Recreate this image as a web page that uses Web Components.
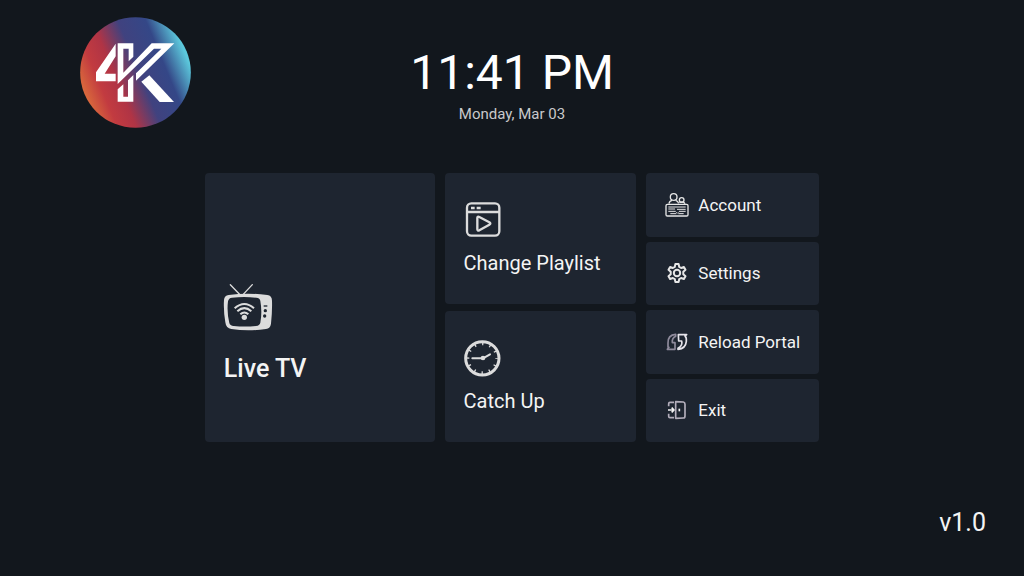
<!DOCTYPE html>
<html lang="en">
<head>
<meta charset="utf-8">
<meta name="viewport" content="width=device-width, initial-scale=1">
<title>4K Player</title>
<style>
  html, body { margin: 0; background: #12171d; }
  body { font-family: Roboto, "Noto Sans", sans-serif; color: #f4f4f4; }
</style>
</head>
<body>
<tv-home></tv-home>

<script>
const define = (name, html) => customElements.define(name, class extends HTMLElement {
  constructor() {
    super();
    this.attachShadow({ mode: 'open' }).innerHTML = html;
  }
});

define('brand-logo', `
  <style>
    :host { display: block; width: 111px; }
    svg { display: block; width: 100%; height: auto; }
  </style>
  <svg viewBox="30 20 333 333" role="img" aria-label="4K">
    <defs>
      <linearGradient id="g" gradientUnits="userSpaceOnUse" x1="46" y1="252" x2="345" y2="128">
        <stop offset="0" stop-color="#d9683c"/>
        <stop offset=".16" stop-color="#c23b40"/>
        <stop offset=".32" stop-color="#b03445"/>
        <stop offset=".54" stop-color="#40427f"/>
        <stop offset=".78" stop-color="#344787"/>
        <stop offset="1" stop-color="#5cc8dc"/>
      </linearGradient>
    </defs>
    <circle cx="196.500" cy="186.500" r="166" fill="url(#g)"/>
    <g fill="#fff" fill-rule="evenodd">
      <path d="M137 100 78 186V213H137V190H104L137 138Z"/>
      <path d="M143 99H190V139L176 153V115H160V187L245 99H313L198 211V189L274 115H252L143 221Z"/>
      <path d="M143 237 160 222V259H174V210L190 194V274H143Z"/>
      <path d="M214 214 238 195 312 275H269Z"/>
    </g>
  </svg>`);

define('home-clock', `
  <style>
    :host { display: block; text-align: center; }
    .time { display: block; font-size: 48px; line-height: 58px; color: #fff; }
    .date { display: block; margin-top: 2px; font-size: 15px; line-height: 20px; color: #c8c9cb; }
  </style>
  <slot name="time" class="time"></slot>
  <slot name="date" class="date"></slot>`);

const tile = `
    :host { display: grid; }
    button { display: flex; margin: 0; border: 0; border-radius: 4px; background: #1e2530;
      color: inherit; font: inherit; text-align: left; cursor: pointer; }
    button:focus-visible { outline: 2px solid #5ecbe0; }
    ::slotted(svg) { display: block; flex: none; overflow: visible; }`;

define('menu-tile', `
  <style>${tile}
    button { flex-direction: column; align-items: flex-start; justify-content: flex-end;
      padding: 0 19px 28px; font-size: 20px; line-height: 26px; gap: 12px; }
    :host([large]) button { padding-bottom: 56px; font-size: 25px; font-weight: 500; line-height: 34px; gap: 20px; }
  </style>
  <button type="button"><slot name="icon"></slot><slot></slot></button>`);

define('menu-row', `
  <style>${tile}
    button { align-items: center; padding: 0 0 0 19px; gap: 9px; font-size: 17px; line-height: 22px; white-space: nowrap; }
  </style>
  <button type="button"><slot name="icon"></slot><slot></slot></button>`);

define('home-menu', `
  <style>
    :host { display: grid; grid-template-columns: 230fr 192fr 173fr; gap: 10px; min-height: 269px; }
    .col { display: grid; grid-auto-rows: 1fr; min-width: 0; }
    .mid { gap: 7px; }
    .side { gap: 5px; }
  </style>
  <div class="col"><slot name="main"></slot></div>
  <div class="col mid"><slot name="mid"></slot></div>
  <div class="col side"><slot name="side"></slot></div>`);

define('tv-home', `
  <style>
    :host { display: flex; flex-direction: column; min-height: 100vh; box-sizing: border-box; }
    header { display: grid; grid-template-columns: 1fr auto 1fr; padding: 17px 80px 0; }
    home-clock { padding-top: 27px; }
    main { width: 60%; margin: 45px auto 0; }
    footer { margin-top: auto; padding: 0 38px 37px; text-align: right; font-size: 25px; line-height: 32px; }
  </style>
  <header>
    <brand-logo></brand-logo>
    <home-clock><span slot="time">11:41 PM</span><span slot="date">Monday, Mar 03</span></home-clock>
  </header>
  <main>
    <home-menu>
      <menu-tile slot="main" large>
        <svg slot="icon" width="50" height="48" viewBox="72 41 150 144" fill="none" stroke="#dcdcdc" aria-hidden="true">
          <path d="M91 43 120 73M157 43 129 73" stroke-width="4" stroke-linecap="round"/>
          <path fill="#dcdcdc" stroke="none" fill-rule="evenodd" d="M72 89Q73 76 86 74Q143 66 202 74Q216 76 216 91Q217 126 213 160Q211 174 198 176Q144 184 94 176Q78 174 76 156Q70 121 72 89ZM84 93Q80 125 88 158Q90 166 101 167Q135 170 168 167Q179 166 181 157Q187 125 181 92Q180 83 169 82Q132 78 96 82Q86 83 84 93Z"/>
          <path d="M104 114Q133 88 162 114M112 123Q133 104 154 123M121 132Q133 121 145 132" stroke-width="6"/>
          <circle cx="133" cy="141" r="8" fill="#dcdcdc" stroke="none"/>
          <path d="M191 107H202" stroke="#1e2530" stroke-width="4"/>
          <g fill="#1e2530" stroke="none"><circle cx="196" cy="121" r="5"/><circle cx="194" cy="137" r="5"/></g>
        </svg>
        Live TV
      </menu-tile>
      <menu-tile slot="mid">
        <svg slot="icon" width="38" height="36" viewBox="72 36 114 108" fill="none" stroke="#dcdcdc" stroke-width="7" stroke-linejoin="round" aria-hidden="true">
          <rect x="81" y="40" width="97" height="97" rx="13"/>
          <path d="M81 66H178"/>
          <path d="M93 54H104M110 54H122"/>
          <path d="M112 84Q112 78 118 81L148 97Q154 101 148 104L118 121Q112 123 112 118Z"/>
        </svg>
        Change Playlist
      </menu-tile>
      <menu-tile slot="mid">
        <svg slot="icon" width="38" height="36" viewBox="73 106 114 108" fill="none" stroke="#dcdcdc" aria-hidden="true">
          <circle cx="128" cy="161" r="50" stroke-width="9"/>
          <circle cx="128" cy="161" r="43" stroke-width="8" stroke-dasharray="4 18.515" stroke-dashoffset="2"/>
          <path d="M98 161H130L151 149" stroke-width="6" stroke-linecap="round" stroke-linejoin="round"/>
          <circle cx="130" cy="160" r="7" fill="#dcdcdc" stroke="none"/>
        </svg>
        Catch Up
      </menu-tile>
      <menu-row slot="side">
        <svg slot="icon" width="24" height="26" viewBox="76 72 72 78" fill="none" stroke="#e6e6e6" stroke-width="4" aria-hidden="true">
          <circle cx="102" cy="87" r="10"/>
          <circle cx="126" cy="96" r="7"/>
          <path d="M88 107Q89 99 97 97M108 97Q115 99 117 106M119 103Q133 100 136 107" />
          <rect x="79" y="109" width="66" height="35" rx="4"/>
          <path d="M86 117H138M86 123H106M112 124H138M86 130H108M118 130H138M92 137H110M116 137H132" stroke-width="3"/>
          <path d="M108 131 113 136 118 131" stroke-width="2"/>
        </svg>
        Account
      </menu-row>
      <menu-row slot="side">
        <svg slot="icon" width="24" height="24" viewBox="0 0 24 24" fill="none" stroke="#e6e6e6" stroke-width="2" stroke-linejoin="round" aria-hidden="true">
          <path d="M10.400 3h3.200l.6 2.900 1.900 1.100 2.800-1 1.600 2.800-2.200 2v2.400l2.200 2-1.600 2.800-2.800-1-1.900 1.100-.6 2.900h-3.200l-.6-2.900-1.900-1.100-2.800 1-1.600-2.800 2.200-2v-2.400l-2.200-2L5.100 6l2.800 1 1.900-1.100z"/>
          <circle cx="12" cy="12" r="3.200"/>
        </svg>
        Settings
      </menu-row>
      <menu-row slot="side">
        <svg slot="icon" width="24" height="24" viewBox="76 91 72 72" fill="none" stroke-width="5" stroke-linejoin="round" aria-hidden="true">
          <path stroke="#8f8b9c" d="M108 104Q84 106 85 130V143H88L83 149H106V129H98Q96 116 108 110Z"/>
          <path stroke="#e6e4ea" d="M116 105H141L136 109Q141 113 140 125Q138 147 115 149V146Q130 138 126 124H117Z"/>
        </svg>
        Reload Portal
      </menu-row>
      <menu-row slot="side">
        <svg slot="icon" width="24" height="24" viewBox="76 296 72 72" fill="none" stroke="#b3aebb" stroke-width="5" stroke-linejoin="round" aria-hidden="true">
          <path d="M87 321V313Q87 309 91 309H103M87 343V351Q87 355 91 355H103"/>
          <path d="M108 307 131 308Q136 309 136 315V349Q136 356 131 356L108 357Z"/>
          <path stroke="#f4f4f4" d="M85 332H100M96 325 103 332 96 339"/>
          <path stroke="#f4f4f4" d="M119 328V336"/>
        </svg>
        Exit
      </menu-row>
    </home-menu>
  </main>
  <footer>v1.0</footer>`);
</script>
</body>
</html>
